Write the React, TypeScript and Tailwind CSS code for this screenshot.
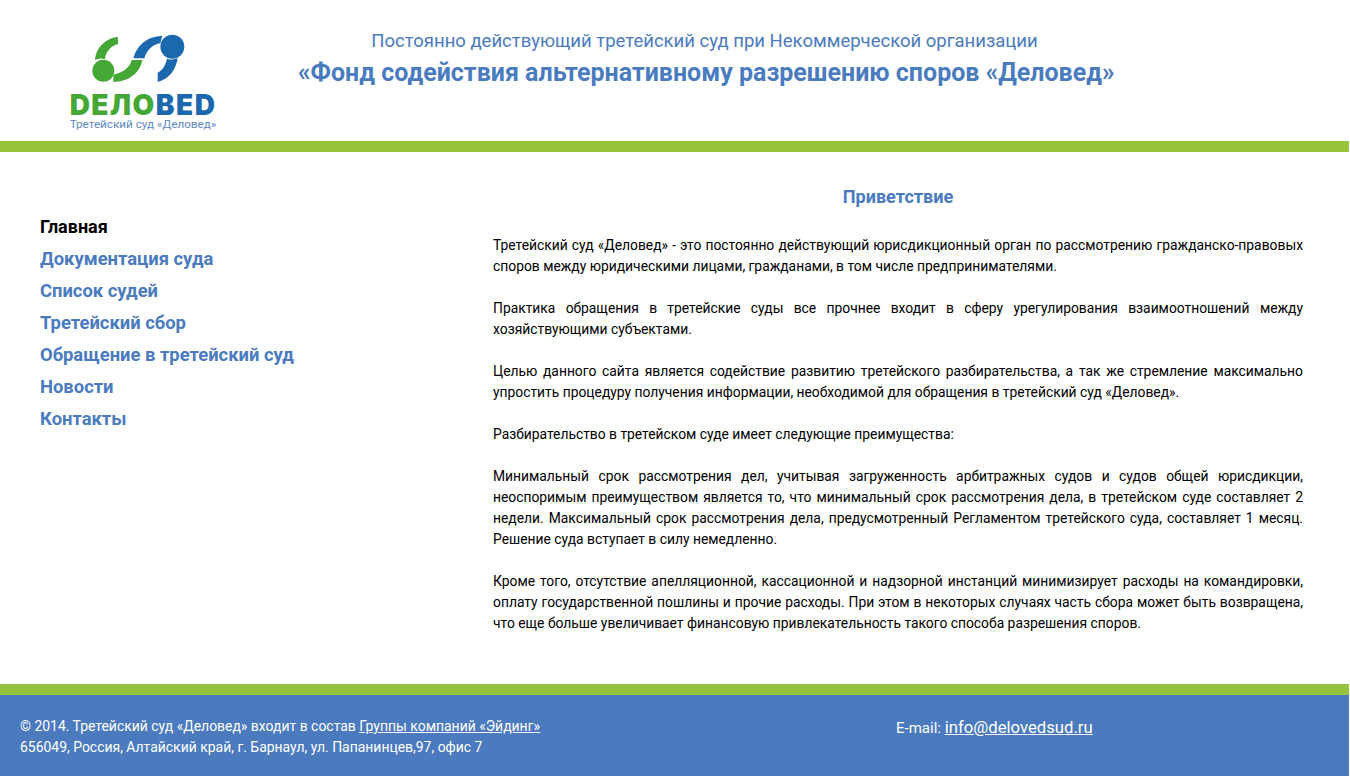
const font = "font-['Roboto','Liberation_Sans',sans-serif]"

const navItems = ['Документация суда', 'Список судей', 'Третейский сбор', 'Обращение в третейский суд', 'Новости', 'Контакты']

const paragraphs = [
  ['Третейский суд «Деловед» - это постоянно действующий юрисдикционный орган по рассмотрению гражданско-правовых', 'споров между юридическими лицами, гражданами, в том числе предпринимателями.'],
  ['Практика обращения в третейские суды все прочнее входит в сферу урегулирования взаимоотношений между', 'хозяйствующими субъектами.'],
  ['Целью данного сайта является содействие развитию третейского разбирательства, а так же стремление максимально', 'упростить процедуру получения информации, необходимой для обращения в третейский суд «Деловед».'],
  ['Разбирательство в третейском суде имеет следующие преимущества:'],
  ['Минимальный срок рассмотрения дел, учитывая загруженность арбитражных судов и судов общей юрисдикции,', 'неоспоримым преимуществом является то, что минимальный срок рассмотрения дела, в третейском суде составляет 2', 'недели. Максимальный срок рассмотрения дела, предусмотренный Регламентом третейского суда, составляет 1 месяц.', 'Решение суда вступает в силу немедленно.'],
  ['Кроме того, отсутствие апелляционной, кассационной и надзорной инстанций минимизирует расходы на командировки,', 'оплату государственной пошлины и прочие расходы. При этом в некоторых случаях часть сбора может быть возвращена,', 'что еще больше увеличивает финансовую привлекательность такого способа разрешения споров.'],
]

const Logo = () => (
  <div className="w-[150px] shrink-0 flex flex-col items-center">
    <svg className="self-start ml-[17px]" width="110" height="60" viewBox="0 0 330 180" fill="none">
      <circle cx="55" cy="122" r="33" fill="#45a836" />
      <path d="M30 90C32 55 60 25 98 20L100 42C78 47 62 65 60 88C50 84 40 85 30 90Z" fill="#45a836" />
      <path d="M85 156C130 155 165 130 172 90L140 90C135 112 115 128 85 134Z" fill="#45a836" />
      <circle cx="262" cy="50" r="36" fill="#1c68ae" />
      <path d="M145 85C155 45 185 20 232 17L226 40C205 42 185 60 178 85Z" fill="#1c68ae" />
      <path d="M278 85C272 120 252 148 218 156L218 128C232 122 242 105 246 86C256 90 268 89 278 85Z" fill="#1c68ae" />
    </svg>
    <div className="mt-[4px] h-[22px] leading-[22px] text-[28px] font-black font-['Inter',sans-serif] tracking-[1.5px] whitespace-nowrap">
      <span className="text-[#45a836]">DЕЛО</span>
      <span className="text-[#1c68ae]">ВЕD</span>
    </div>
    <div className="mt-[1px] text-[11.7px] leading-[14px] text-[#5f88c4] whitespace-nowrap">Третейский суд «Деловед»</div>
  </div>
)

export default function App() {
  return (
    <div className={`${font} w-[1349px] min-h-[776px] flex flex-col bg-white text-black`}>
      <header className="h-[141px] flex pl-[68px] pt-[30px]">
        <Logo />
        <div className="ml-[80px] w-[813px] text-center text-[#4b7bbf] whitespace-nowrap">
          <div className="text-[18.5px] leading-[22px]">Постоянно действующий третейский суд при Некоммерческой организации</div>
          <div className="mt-[5px] text-[25px] leading-[32px] font-bold">«Фонд содействия альтернативному разрешению споров «Деловед»</div>
        </div>
      </header>
      <div className="h-[11px] bg-[#96c43c]" />
      <main className="flex-1 flex">
        <nav className="w-[493px] pl-[40px] pt-[59px] shrink-0">
          <div className="text-[18px] leading-[32px] font-bold">Главная</div>
          {navItems.map((item) => (
            <div key={item} className="text-[18.4px] leading-[32px] font-bold text-[#4b7bbf]">{item}</div>
          ))}
        </nav>
        <section className="w-[810px] pt-[32px] text-[13.85px] leading-[21px]">
          <h1 className="text-center text-[18.1px] leading-[26px] font-bold text-[#4b7bbf] mb-[25px]">Приветствие</h1>
          {paragraphs.map((lines, i) => (
            <p key={i} className="mb-[21px]">
              {lines.map((line, j) => (
                <span key={j} className={j < lines.length - 1 ? 'block [text-align-last:justify]' : 'block whitespace-nowrap'}>{line}</span>
              ))}
            </p>
          ))}
        </section>
      </main>
      <div className="h-[11px] bg-[#96c43c]" />
      <footer className="h-[81px] bg-[#4b7abf] text-white flex pl-[20px] pt-[21px] text-[13.95px] leading-[21px]">
        <div className="w-[876px] whitespace-nowrap">
          <div>© 2014. Третейский суд «Деловед» входит в состав <a className="underline">Группы компаний «Эйдинг»</a></div>
          <div>656049, Россия, Алтайский край, г. Барнаул, ул. Папанинцев,97, офис 7</div>
        </div>
        <div className="whitespace-nowrap mt-[1px] text-[15px]">E-mail: <a className="underline text-[16.7px]">info@delovedsud.ru</a></div>
      </footer>
    </div>
  )
}
